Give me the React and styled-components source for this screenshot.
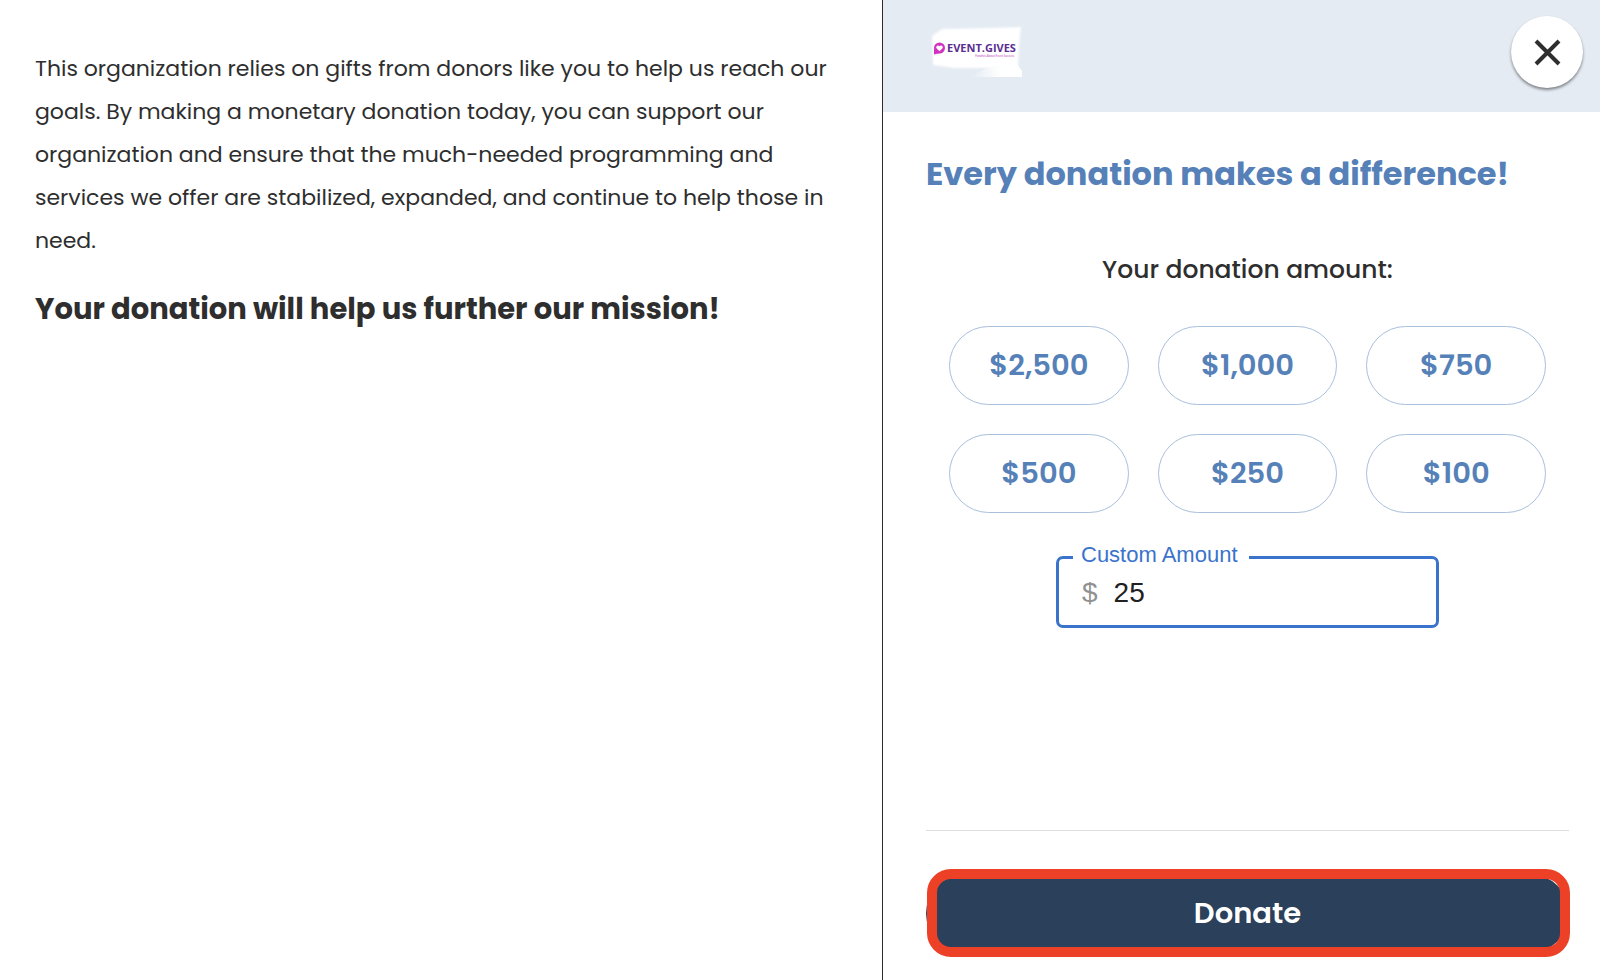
import { useState } from "react";
import styled, { createGlobalStyle } from "styled-components";

const AMOUNTS = [2500, 1000, 750, 500, 250, 100];

export default function App() {
	const [amount, setAmount] = useState("25");

	return (
		<>
			<GlobalStyle />
			<Page>
				<Story>
					<StoryText>
						This organization relies on gifts from donors like you to
						help us reach our goals. By making a monetary donation
						today, you can support our organization and ensure that
						the much-needed programming and services we offer are
						stabilized, expanded, and continue to help those in need.
					</StoryText>
					<StoryTitle>
						Your donation will help us further our mission!
					</StoryTitle>
				</Story>
				<Panel>
					<Header>
						<Logo />
						<CloseButton type="button" aria-label="Close">
							<CloseIcon viewBox="0 0 28 28">
								<path d="M3 3L26 26M26 3L3 26" />
							</CloseIcon>
						</CloseButton>
					</Header>
					<Form onSubmit={(e) => e.preventDefault()}>
						<Title>Every donation makes a difference!</Title>
						<Subtitle>Your donation amount:</Subtitle>
						<Amounts>
							{AMOUNTS.map((value) => (
								<AmountButton
									key={value}
									type="button"
									onClick={() => setAmount(String(value))}
								>
									${value.toLocaleString("en-US")}
								</AmountButton>
							))}
						</Amounts>
						<Field>
							<FieldLegend>
								<label htmlFor="custom-amount">
									Custom Amount
								</label>
							</FieldLegend>
							<InputRow>
								<Currency>$</Currency>
								<Input
									id="custom-amount"
									inputMode="decimal"
									value={amount}
									onChange={(e) => setAmount(e.target.value)}
								/>
							</InputRow>
						</Field>
						<Footer>
							<DonateButton type="submit">Donate</DonateButton>
						</Footer>
					</Form>
				</Panel>
			</Page>
		</>
	);
}

function Logo() {
	return (
		<LogoImage viewBox="0 0 92 54" role="img" aria-label="Event.Gives">
			<defs>
				<filter id="soft" x="-10%" y="-10%" width="120%" height="120%">
					<feGaussianBlur stdDeviation="0.8" />
				</filter>
				<linearGradient id="fade" x1="0" x2="1">
					<stop offset="0" stopColor="#fff" stopOpacity="0" />
					<stop offset="0.6" stopColor="#fff" />
				</linearGradient>
			</defs>
			<path
				d="M1 11 L11 4 L60 3 L90 2 L88 20 L87 41 L60 43 L22 43 L2 40 Z"
				fill="#fff"
				filter="url(#soft)"
			/>
			<path d="M38 52 L56 43 L86 39 L91 46 L91 52 Z" fill="url(#fade)" />
			<path d="M3 24L3 29.500L9 28Z" fill="#d232c0" />
			<circle cx="8.500" cy="23" r="5.500" fill="#d232c0" />
			<path
				d="M8.500 26.300l-3 -3a1.700 1.700 0 0 1 3 -2a1.700 1.700 0 0 1 3 2z"
				fill="#fff"
			/>
			<LogoName x="16" y="27">
				EVENT.GIVES
			</LogoName>
			<LogoTagline x="83" y="32">
				Fanatics About Event Success
			</LogoTagline>
		</LogoImage>
	);
}

const GlobalStyle = createGlobalStyle`
	*, *::before, *::after {
		box-sizing: border-box;
	}

	body {
		margin: 0;
		background-color: #fff;
		color: #2e2e2e;
		font-family: Poppins, Inter, "Open Sans", sans-serif;
	}

	button, input {
		font-family: inherit;
	}
`;

const Page = styled.main`
	display: grid;
	grid-template-columns: minmax(0, 883fr) minmax(0, 717fr);
	min-height: 100vh;
`;

const Story = styled.section`
	padding: 47px 40px 40px 35px;
	border-right: 1px solid #2b2b2b;
`;

const StoryText = styled.p`
	margin: 0;
	font-size: 22px;
	line-height: 43px;
`;

const StoryTitle = styled.h2`
	margin: 25px 0 0;
	font-size: 29px;
	font-weight: 700;
	line-height: 44px;
`;

const Panel = styled.section`
	display: flex;
	flex-direction: column;
`;

const Header = styled.header`
	display: flex;
	justify-content: space-between;
	align-items: flex-start;
	height: 112px;
	padding: 16px 17px 0 48px;
	background-color: #e4ebf3;
`;

const LogoImage = styled.svg`
	width: 92px;
	height: 54px;
	margin-top: 9px;
`;

const LogoName = styled.text`
	font-family: "Open Sans", sans-serif;
	font-size: 11px;
	font-weight: 700;
	fill: #5c2d91;
`;

const LogoTagline = styled.text`
	font-family: Lato, sans-serif;
	font-size: 3px;
	text-anchor: end;
	fill: #c04bc8;
`;

const CloseButton = styled.button`
	display: flex;
	justify-content: center;
	align-items: center;
	width: 72px;
	height: 72px;
	padding: 0;
	border: none;
	border-radius: 50%;
	background-color: #fff;
	color: #2e2e2e;
	box-shadow: 0 2px 3px rgb(0 0 0 / 0.45);
	cursor: pointer;
`;

const CloseIcon = styled.svg`
	width: 28px;
	height: 28px;
	fill: none;
	stroke: currentColor;
	stroke-width: 4;
`;

const Form = styled.form`
	flex: 1;
	display: flex;
	flex-direction: column;
	padding: 38px 31px 27px 43px;
`;

const Title = styled.h1`
	margin: 0;
	color: #5581b8;
	font-size: 32px;
	font-weight: 700;
	line-height: 48px;
`;

const Subtitle = styled.p`
	margin: 53px 0 38px;
	font-size: 25px;
	font-weight: 500;
	line-height: 37px;
	text-align: center;
`;

const Amounts = styled.div`
	display: grid;
	grid-template-columns: repeat(3, 1fr);
	gap: 29px;
	padding: 0 23px;
`;

const AmountButton = styled.button`
	height: 79px;
	padding: 0;
	border: 1px solid #a9bfdc;
	border-radius: 40px;
	background-color: #fff;
	color: #5581b8;
	font-size: 29px;
	font-weight: 600;
	cursor: pointer;
`;

const Field = styled.fieldset`
	width: 383px;
	min-width: 0;
	max-width: 100%;
	margin: 29px auto 40px;
	padding: 0 23px;
	border: 3px solid #3a73cc;
	border-radius: 7px;
	font-family: "Liberation Sans", Arial, sans-serif;
`;

const FieldLegend = styled.legend`
	margin-left: -9px;
	padding: 0 11px 4px 8px;
	color: #3a73cc;
	font-size: 22px;
	line-height: 26px;
`;

const InputRow = styled.div`
	display: flex;
	align-items: center;
	gap: 16px;
	height: 53px;
	padding-bottom: 11px;
	font-size: 28px;
`;

const Currency = styled.span`
	color: #919191;
`;

const Input = styled.input`
	flex: 1;
	width: 100%;
	min-width: 0;
	padding: 0;
	border: none;
	outline: none;
	background: none;
	color: #212121;
	font-size: 28px;
`;

const Footer = styled.footer`
	margin-top: auto;
	padding-top: 43px;
	border-top: 1px solid #dedede;
`;

const DonateButton = styled.button`
	position: relative;
	display: block;
	width: 100%;
	height: 79px;
	border: none;
	border-radius: 40px;
	background-color: #2b405a;
	color: #fff;
	font-size: 29px;
	font-weight: 600;
	cursor: pointer;

	/* highlight ring drawn over the button edge */
	&::after {
		content: "";
		position: absolute;
		inset: -5px -1px -4px 1px;
		border: 10px solid #ec4127;
		border-radius: 24px;
	}
`;
